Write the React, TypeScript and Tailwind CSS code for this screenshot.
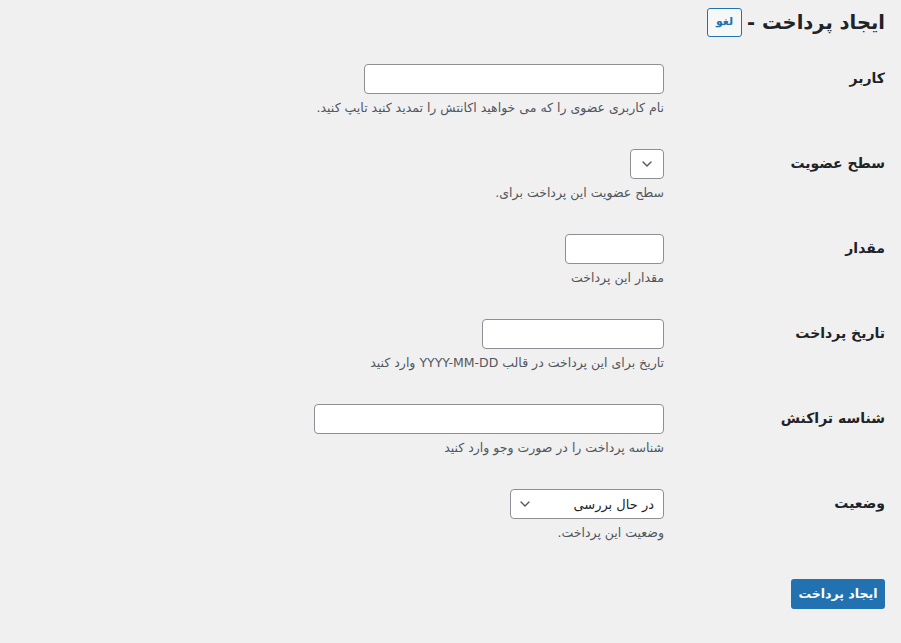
import React from 'react';

const Chevron = () => (
  <svg width="10" height="6" viewBox="0 0 10 6" fill="none">
    <path d="M1 1l4 4 4-4" stroke="#50575e" strokeWidth="1.4" strokeLinecap="round" strokeLinejoin="round" />
  </svg>
);

const rows = [
  { label: 'کاربر', kind: 'input', width: 'w-[300px]', desc: 'نام کاربری عضوی را که می خواهید اکانتش را تمدید کنید تایپ کنید.' },
  { label: 'سطح عضویت', kind: 'select', width: 'w-[34px]', value: '', desc: 'سطح عضویت این پرداخت برای.' },
  { label: 'مقدار', kind: 'input', width: 'w-[99px]', desc: 'مقدار این پرداخت' },
  { label: 'تاریخ پرداخت', kind: 'input', width: 'w-[182px]', desc: 'تاریخ برای این پرداخت در قالب YYYY-MM-DD وارد کنید' },
  { label: 'شناسه تراکنش', kind: 'input', width: 'w-[350px]', desc: 'شناسه پرداخت را در صورت وجو وارد کنید' },
  { label: 'وضعیت', kind: 'select', width: 'w-[154px]', value: 'در حال بررسی', desc: 'وضعیت این پرداخت.' },
];

export default function App() {
  return (
    <div
      dir="rtl"
      className="min-h-[643px] bg-[#f0f0f1] pr-4 text-[#1d2327]"
      style={{ fontFamily: 'Tahoma, "DejaVu Sans", sans-serif' }}
    >
      {/* Header */}
      <div className="flex h-[49px] items-start gap-[5px] pt-2">
        <h1 className="text-[19.5px] font-bold leading-[30px]">ایجاد پرداخت -</h1>
        <button className="h-[29px] w-[35px] rounded-[3px] border border-[#2271b1] bg-[#f6f7f7] text-[11px] font-bold text-[#2271b1]">
          لغو
        </button>
      </div>

      {/* Form rows */}
      {rows.map((row, i) => (
        <div key={i} className="flex h-[85px]">
          <div className="w-[221px] shrink-0 pt-[20px] text-[14px] font-bold leading-[18px]">{row.label}</div>
          <div className="pt-[15px]">
            {row.kind === 'input' ? (
              <div className={`h-[30px] rounded-[4px] border border-[#8c8f94] bg-white ${row.width}`} />
            ) : (
              <div
                className={`flex h-[30px] items-center rounded-[4px] border border-[#8c8f94] bg-white ${row.width} ${row.value ? 'justify-between pl-[9px] pr-[9px]' : 'justify-center'}`}
              >
                {row.value ? <span className="text-[13px] leading-none">{row.value}</span> : null}
                <Chevron />
              </div>
            )}
            <p className="mt-[4px] whitespace-nowrap text-[12.5px] leading-[19px] text-[#50575e]">{row.desc}</p>
          </div>
        </div>
      ))}

      <div className="pt-[20px]">
        <button className="h-[30px] w-[94px] rounded-[3px] bg-[#2271b1] text-[12.5px] font-bold text-white">
          ایجاد پرداخت
        </button>
      </div>
    </div>
  );
}
